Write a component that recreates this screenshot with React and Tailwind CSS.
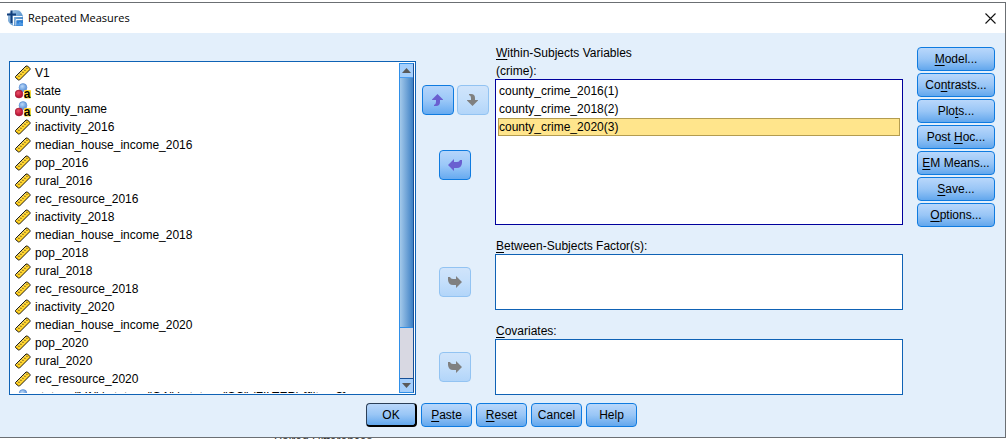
import React from "react";

const variables = [
  { name: "V1", type: "scale" },
  { name: "state", type: "nominal" },
  { name: "county_name", type: "nominal" },
  { name: "inactivity_2016", type: "scale" },
  { name: "median_house_income_2016", type: "scale" },
  { name: "pop_2016", type: "scale" },
  { name: "rural_2016", type: "scale" },
  { name: "rec_resource_2016", type: "scale" },
  { name: "inactivity_2018", type: "scale" },
  { name: "median_house_income_2018", type: "scale" },
  { name: "pop_2018", type: "scale" },
  { name: "rural_2018", type: "scale" },
  { name: "rec_resource_2018", type: "scale" },
  { name: "inactivity_2020", type: "scale" },
  { name: "median_house_income_2020", type: "scale" },
  { name: "pop_2020", type: "scale" },
  { name: "rural_2020", type: "scale" },
  { name: "rec_resource_2020", type: "scale" },
  { name: 'state = "VA" | state = "GA" | state = "SC" (FILTER) [filter_$]', type: "nominal" },
];

const withinVariables = ["county_crime_2016(1)", "county_crime_2018(2)", "county_crime_2020(3)"];

const options = [
  ["", "M", "odel..."],
  ["Co", "n", "trasts..."],
  ["Plo", "t", "s..."],
  ["Post ", "H", "oc..."],
  ["", "E", "M Means..."],
  ["", "S", "ave..."],
  ["", "O", "ptions..."],
];

const actions = [
  ["OK", "", ""],
  ["", "P", "aste"],
  ["", "R", "eset"],
  ["Cancel", "", ""],
  ["Help", "", ""],
];

function Mnemonic({ parts }) {
  return (
    <>
      {parts[0]}
      {parts[1] && <span className="underline underline-offset-2">{parts[1]}</span>}
      {parts[2]}
    </>
  );
}

function ScaleIcon() {
  return (
    <svg className="size-4 shrink-0" viewBox="0 0 16 16" aria-hidden="true">
      <path d="M0.500 11.500 11 1H12.500L15 3.500V4.500L4.500 15H3.500L0.500 12.500Z" fill="#ffc80a" stroke="#1a1a1a" strokeWidth="1" />
      <path d="M3.500 13.500 13.500 3.500" stroke="#ffd633" strokeWidth="2" />
      <path d="M2 11.500 11.500 2" stroke="#fff0a0" strokeWidth="1" />
      <path d="M3 10.500l1.500 1.500M5 8.500l1.500 1.500M7 6.500l1.500 1.500M9 4.500l1.500 1.500M11 2.500l1.500 1.500" stroke="#333" strokeWidth="0.800" />
    </svg>
  );
}

function NominalIcon() {
  return (
    <svg className="size-4 shrink-0" viewBox="0 0 16 16" aria-hidden="true">
      <defs>
        <radialGradient id="ball-blue" cx="40%" cy="35%">
          <stop offset="0" stopColor="#b9d8fa" />
          <stop offset="1" stopColor="#6c9fde" />
        </radialGradient>
        <radialGradient id="ball-red" cx="40%" cy="35%">
          <stop offset="0" stopColor="#e85068" />
          <stop offset="1" stopColor="#c01838" />
        </radialGradient>
      </defs>
      <circle cx="8" cy="4.500" r="3.900" fill="url(#ball-blue)" stroke="#5b8ed2" strokeWidth="0.700" />
      <circle cx="4" cy="11" r="3.900" fill="url(#ball-red)" stroke="#9c1c38" strokeWidth="0.700" />
      <rect x="9" y="7" width="7" height="8.500" rx="1" fill="#ffd633" />
      <text x="8.800" y="14.500" fontFamily="Liberation Sans, sans-serif" fontWeight="700" fontSize="12" fill="#000">a</text>
    </svg>
  );
}

function AppIcon() {
  return (
    <svg className="size-4 shrink-0" viewBox="0 0 16 16" aria-hidden="true">
      <defs>
        <linearGradient id="app-disc" x1="0" y1="0" x2="1" y2="1">
          <stop offset="0" stopColor="#b7cfe6" />
          <stop offset="0.500" stopColor="#6fa3d4" />
          <stop offset="1" stopColor="#256fc0" />
        </linearGradient>
      </defs>
      <path d="M5 0.500Q8 -0.500 12 0.500Q15.500 3 16 7V16H7Q3 15 1 11V4Z" fill="url(#app-disc)" />
      <path d="M4.500 0.500v12.500M0 4.500h9" stroke="#123f7c" strokeWidth="2" />
      <path d="M6.500 15.500V6.500H15.500" fill="none" stroke="#fff" strokeWidth="1.200" />
      <path d="M9 15.500V9.500H15.500" fill="none" stroke="#f0f6fd" strokeWidth="1" />
      <rect x="9.500" y="11" width="6.500" height="5" fill="#2b7fd6" />
      <path d="M11 15.500v-2M13 15.500v-3.500M15 15.500v-2.500" stroke="#8cc2f2" strokeWidth="0.800" />
    </svg>
  );
}

const verticalArrow = "M5.500 0 11 5.500V6H8V8Q8 12 4 12H2V11Q4 10.500 4 8V6H0V5.500Z";
const sideArrow = "M0 6 6 0V3H9Q11.500 3 12 1H14V4Q13.500 9 9 9H6V12Z";

function Arrow({ direction }) {
  const vertical = direction === "up" || direction === "down";
  const flip = direction === "down" ? "translate(0 12) scale(1 -1)" : direction === "right" ? "translate(14 0) scale(-1 1)" : undefined;
  return (
    <svg width={vertical ? 11 : 14} height="12" aria-hidden="true">
      <path d={vertical ? verticalArrow : sideArrow} transform={flip} fill="currentColor" />
    </svg>
  );
}

function ArrowButton({ direction, label, disabled }) {
  return (
    <button
      type="button"
      aria-label={label}
      disabled={disabled}
      className="flex h-[30px] w-8 items-center justify-center rounded-[4px] border border-[#0f7be0] bg-linear-to-b from-[#b5d5fb] via-[#9bc8f8] to-[#66aaf0] text-[#6a5fd0] disabled:border-[#92c3f2] disabled:from-[#d0e4fb] disabled:via-[#c4dffb] disabled:to-[#b2d5f9] disabled:text-[#808080]"
    >
      <Arrow direction={direction} />
    </button>
  );
}

function PushButton({ parts, className }) {
  return (
    <button
      type="button"
      className={`h-6 rounded-[4px] border bg-linear-to-b from-[#b9d7fb] via-[#99c6f6] to-[#62a7ed] text-center whitespace-nowrap ${className}`}
    >
      <Mnemonic parts={parts} />
    </button>
  );
}

function ScrollBar() {
  return (
    <div className="mt-px mr-px mb-px flex w-[15px] shrink-0 flex-col border border-[#2f8fe8] border-r-[#174f96] bg-[#d8d8e2]">
      <button type="button" aria-label="Scroll up" className="flex h-[14px] items-center justify-center border-b border-[#4a9cf0] bg-[#a5cffc]">
        <svg width="9" height="5" aria-hidden="true"><path d="M4.500 0 9 5H0Z" fill="#5a5a5a" /></svg>
      </button>
      <div className="h-[250px] border-b border-[#2f8fe8] bg-linear-to-r from-[#a3c9ea] to-[#3c80c4]" />
      <div className="flex-1" />
      <button type="button" aria-label="Scroll down" className="flex h-[14px] items-center justify-center border-t border-[#174f96] bg-[#a5cffc]">
        <svg width="9" height="5" aria-hidden="true"><path d="M0 0H9L4.500 5Z" fill="#5a5a5a" /></svg>
      </button>
    </div>
  );
}

export default function App() {
  return (
    <main className="overflow-hidden bg-white pt-[2px] pr-[2px] font-['Liberation_Sans',Arial,sans-serif] text-[12px] leading-[18px] text-black">
      <section aria-labelledby="dialog-title" className="border-t border-r border-b border-[#6b6f73] bg-[#e3effb]">
        <header className="flex h-[30px] items-center bg-white pr-[9px] pl-[7px]">
          <AppIcon />
          <h1 id="dialog-title" className="ml-[5px] flex-1 font-['Open_Sans','Noto_Sans',sans-serif] text-[11px]">
            Repeated Measures
          </h1>
          <button type="button" aria-label="Close" className="flex size-3 items-center justify-center">
            <svg width="11" height="11" aria-hidden="true"><path d="M.5.5 10.500 10.500M10.500.5.5 10.500" stroke="#111" strokeWidth="1.100" /></svg>
          </button>
        </header>

        <div className="grid grid-cols-[minmax(0,407fr)_79px_minmax(0,408fr)_92px] pt-[11px] pr-[10px] pl-[9px]">
          <div className="mt-[17px] flex h-[334px] border border-[#0f62b5] bg-white">
            <ul role="listbox" aria-label="Variables" className="mb-px min-w-0 flex-1 overflow-hidden pt-[2px] pl-[5px]">
              {variables.map((v) => (
                <li key={v.name} role="option" aria-selected="false" className="flex h-[18px] items-center gap-1 whitespace-nowrap">
                  {v.type === "scale" ? <ScaleIcon /> : <NominalIcon />}
                  <span>{v.name}</span>
                </li>
              ))}
            </ul>
            <ScrollBar />
          </div>

          <div className="flex flex-col items-center pt-[41px] pr-px">
            <div className="flex gap-[3px]">
              <ArrowButton direction="up" label="Move up" />
              <ArrowButton direction="down" label="Move down" disabled />
            </div>
            <div className="mt-[35px]">
              <ArrowButton direction="left" label="Remove from within-subjects variables" />
            </div>
            <div className="mt-[87px]">
              <ArrowButton direction="right" label="Add between-subjects factor" disabled />
            </div>
            <div className="mt-[55px]">
              <ArrowButton direction="right" label="Add covariate" disabled />
            </div>
          </div>

          <div className="flex flex-col">
            <div id="within-label" className="h-[35px] pl-px">
              <Mnemonic parts={["", "W", "ithin-Subjects Variables"]} />
              <br />
              (crime):
            </div>
            <ul role="listbox" aria-labelledby="within-label" className="h-[146px] border border-[#00009c] bg-white px-[2px] pt-[2px]">
              {withinVariables.map((name, i) => (
                <li
                  key={name}
                  role="option"
                  aria-selected={i === 2}
                  className="flex h-[18px] items-center border border-transparent aria-selected:border-[#b39c50] aria-selected:bg-[#ffe58c]"
                >
                  {name}
                </li>
              ))}
            </ul>
            <div id="between-label" className="mt-3 h-[17px] pl-px">
              <Mnemonic parts={["", "B", "etween-Subjects Factor(s):"]} />
            </div>
            <ul role="listbox" aria-labelledby="between-label" className="h-14 border border-[#0f62b5] bg-white" />
            <div id="covariates-label" className="mt-3 h-[17px] pl-px">
              <Mnemonic parts={["", "C", "ovariates:"]} />
            </div>
            <ul role="listbox" aria-labelledby="covariates-label" className="h-14 border border-[#0f62b5] bg-white" />
          </div>

          <div className="flex flex-col gap-[2px] pt-[3px] pl-[14px]">
            {options.map((parts) => (
              <PushButton key={parts.join("")} parts={parts} className="w-full border-[#0f7be0]" />
            ))}
          </div>
        </div>

        <footer className="flex justify-center gap-1 pt-2 pr-[2px] pb-[10px]">
          {actions.map((parts, i) => (
            <PushButton
              key={parts.join("")}
              parts={parts}
              className={i === 0 ? "w-[51px] border-r-2 border-b-2 border-[#2b3f58] border-r-black border-b-black" : "w-[51px] border-[#0f7be0]"}
            />
          ))}
        </footer>
      </section>
      <p className="h-px overflow-hidden pl-[274px] leading-[6px] text-[#333]">Paired Differences</p>
    </main>
  );
}
